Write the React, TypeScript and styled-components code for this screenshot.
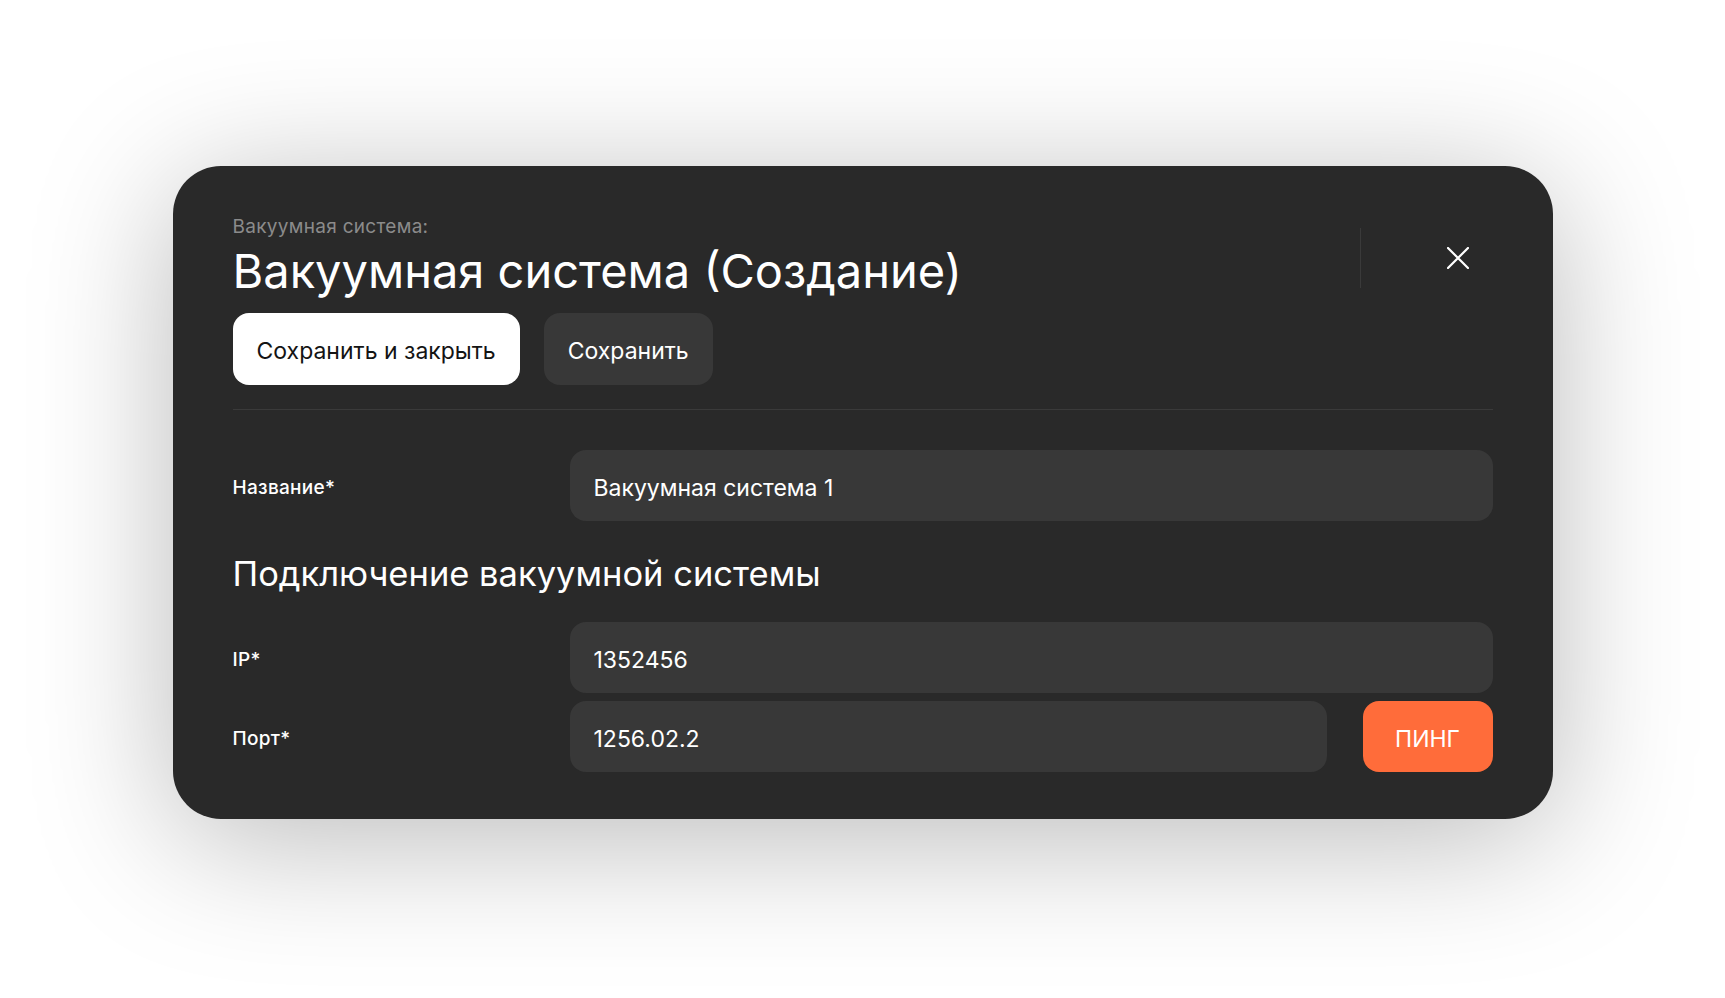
import React from 'react';
import styled, { createGlobalStyle } from 'styled-components';

const GlobalStyle = createGlobalStyle`
  * {
    box-sizing: border-box;
  }

  body {
    margin: 0;
    background: #ffffff;
    font-family: Inter, 'Noto Sans', sans-serif;
  }
`;

const Page = styled.div`
  display: flex;
  justify-content: center;
  align-items: flex-start;
  padding-top: 166px;
  min-height: 998px;
`;

const Modal = styled.section`
  width: 1380px;
  padding: 50px 60px 47px;
  background: #292929;
  border-radius: 48px;
  box-shadow: 0 20px 140px rgba(0, 0, 0, 0.28);
  color: #ffffff;
`;

const Header = styled.header`
  display: flex;
  justify-content: space-between;
  align-items: flex-start;
  padding-bottom: 24px;
  border-bottom: 1px solid #3a3a3a;
`;

const HeaderMain = styled.div`
  display: flex;
  flex-direction: column;
`;

const Caption = styled.div`
  font-size: 19px;
  line-height: 22px;
  letter-spacing: 0.3px;
  color: #8b8b8b;
  margin-bottom: 4px;
`;

const Title = styled.h1`
  margin: 0;
  font-size: 47px;
  line-height: 58px;
  font-weight: 400;
`;

const Actions = styled.div`
  display: flex;
  gap: 24px;
  margin-top: 13px;
`;

const Button = styled.button<{ variant: 'light' | 'dark' | 'accent' }>`
  height: 72px;
  padding: 4px 24px 0;
  border: none;
  border-radius: 16px;
  font-family: inherit;
  font-size: 23px;
  font-weight: 400;
  cursor: pointer;
  background: ${p =>
    p.variant === 'light' ? '#ffffff' : p.variant === 'accent' ? '#ff6c3a' : '#383838'};
  color: ${p => (p.variant === 'light' ? '#141414' : '#ffffff')};
`;

const PingButton = styled(Button)`
  width: 130px;
  height: 71px;
  flex-shrink: 0;
  text-transform: uppercase;
`;

const HeaderSide = styled.div`
  display: flex;
  align-items: center;
  gap: 62px;
  margin-top: 7px;
`;

const VDivider = styled.div`
  width: 1px;
  height: 60px;
  background: #3a3a3a;
`;

const CloseButton = styled.button`
  width: 70px;
  height: 70px;
  display: flex;
  align-items: center;
  justify-content: center;
  border: none;
  background: transparent;
  color: #ffffff;
  cursor: pointer;
  padding: 0;
`;

const Form = styled.div`
  display: flex;
  flex-direction: column;
  padding-top: 40px;
`;

const FieldRow = styled.div<{ gapAfter?: number }>`
  display: grid;
  grid-template-columns: 337px 1fr;
  align-items: center;
  margin-bottom: ${p => p.gapAfter ?? 0}px;
`;

const Label = styled.label`
  padding-top: 4px;
  font-size: 19px;
  font-weight: 500;
  letter-spacing: 0.3px;
  color: #ffffff;
`;

const InputLine = styled.div`
  display: flex;
  gap: 36px;
`;

const Input = styled.input`
  flex: 1;
  min-width: 0;
  height: 71px;
  padding: 4px 24px 0;
  border: none;
  border-radius: 16px;
  background: #383838;
  color: #ffffff;
  font-family: inherit;
  font-size: 23px;
  outline: none;
`;

const SectionTitle = styled.h2`
  margin: 31px 0 26px;
  font-size: 34.5px;
  line-height: 44px;
  font-weight: 400;
`;

const CloseIcon = () => (
  <svg width="22" height="22" viewBox="0 0 22 22" fill="none">
    <path d="M1 1L21 21M21 1L1 21" stroke="currentColor" strokeWidth="2.2" strokeLinecap="round" />
  </svg>
);

export default function App() {
  return (
    <>
      <GlobalStyle />
      <Page>
        <Modal>
          <Header>
            <HeaderMain>
              <Caption>Вакуумная система:</Caption>
              <Title>Вакуумная система (Создание)</Title>
              <Actions>
                <Button variant="light">Сохранить и закрыть</Button>
                <Button variant="dark">Сохранить</Button>
              </Actions>
            </HeaderMain>
            <HeaderSide>
              <VDivider />
              <CloseButton aria-label="Закрыть">
                <CloseIcon />
              </CloseButton>
            </HeaderSide>
          </Header>

          <Form>
            <FieldRow>
              <Label>Название*</Label>
              <Input defaultValue="Вакуумная система 1" />
            </FieldRow>

            <SectionTitle>Подключение вакуумной системы</SectionTitle>

            <FieldRow gapAfter={8}>
              <Label>IP*</Label>
              <Input defaultValue="1352456" />
            </FieldRow>
            <FieldRow>
              <Label>Порт*</Label>
              <InputLine>
                <Input defaultValue="1256.02.2" />
                <PingButton variant="accent">Пинг</PingButton>
              </InputLine>
            </FieldRow>
          </Form>
        </Modal>
      </Page>
    </>
  );
}
